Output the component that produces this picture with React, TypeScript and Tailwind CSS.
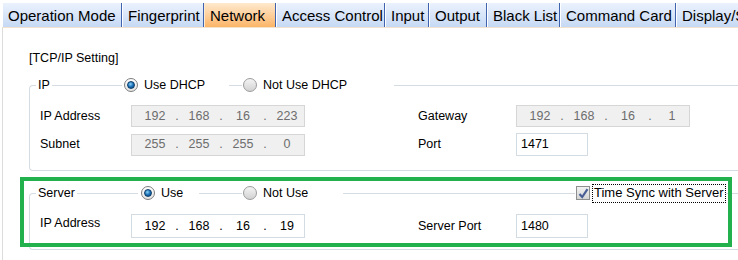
import { ReactNode } from "react";

const tabs = [
  { label: "Operation Mode", width: "w-[120px]" },
  { label: "Fingerprint", width: "w-[82px]" },
  { label: "Network", width: "w-[72px]", active: true },
  { label: "Access Control", width: "w-[109px]" },
  { label: "Input", width: "w-[44px]" },
  { label: "Output", width: "w-[58px]" },
  { label: "Black List", width: "w-[73px]" },
  { label: "Command Card", width: "w-[116px]" },
  { label: "Display/Sound", width: "w-[110px]" },
];

function Radio({ checked, label }: { checked?: boolean; label: string }) {
  return (
    <div className="flex items-center gap-[6px]">
      <span
        className={
          checked
            ? "flex h-[14px] w-[14px] items-center justify-center rounded-full border border-[#7d7d7d] bg-gradient-to-b from-white to-[#e4e4e4]"
            : "flex h-[14px] w-[14px] items-center justify-center rounded-full border border-[#9c9c9c] bg-gradient-to-b from-[#f4f4f4] to-[#d2d2d2]"
        }
      >
        {checked && (
          <span className="h-[8px] w-[8px] rounded-full border border-[#0d3b68] bg-[radial-gradient(circle_at_40%_35%,#8fd0f7,#1a73b8_50%,#0a3c6e)]" />
        )}
      </span>
      <span>{label}</span>
    </div>
  );
}

function Line({ className = "flex-1" }: { className?: string }) {
  return <div className={`h-px bg-[#d5dde3] ${className}`} />;
}

function GroupHeader({ label, lead, children }: { label: string; lead: string; children: ReactNode }) {
  return (
    <div className="flex h-[18px] items-center">
      <div className={`flex h-full items-center ${lead}`}>
        <div className="h-[9px] w-[7px] self-end rounded-tl-[4px] border-l border-t border-[#d5dde3]" />
        <span className="px-[2px]">{label}</span>
        <Line />
      </div>
      {children}
    </div>
  );
}

function IpBox({ parts, disabled, tall }: { parts: string[]; disabled?: boolean; tall?: boolean }) {
  return (
    <div
      className={`flex w-[174px] items-center pl-[3px] ${tall ? "h-[24px]" : "h-[22px]"} ${
        disabled ? "border border-[#d6d6d6] bg-[#f0f0f0] text-[#6d6d6d]" : "border border-[#d3dbe3] bg-white text-black"
      }`}
    >
      {parts.map((p, i) => (
        <div className="flex" key={i}>
          {i > 0 && <span className="w-[4px] text-center">.</span>}
          <span className="w-[40px] text-center">{p}</span>
        </div>
      ))}
    </div>
  );
}

function TextBox({ value, tall }: { value: string; tall?: boolean }) {
  return (
    <div
      className={`flex w-[72px] items-center border border-[#d3dbe3] bg-white pl-[4px] ${tall ? "h-[24px]" : "h-[23px]"}`}
    >
      {value}
    </div>
  );
}

export default function App() {
  return (
    <div className="relative h-[260px] w-[738px] overflow-hidden bg-white font-['Liberation_Sans',Arial,sans-serif] text-[12.5px] text-black">
      {/* tab strip */}
      <div className="ml-[2px] mt-[3px] flex h-[24px] whitespace-nowrap text-[15px]">
        {tabs.map((t) => (
          <div
            className={`flex shrink-0 items-center overflow-hidden border-l border-r pl-[5px] pt-[2px] ${t.width} ${
              t.active
                ? "border-l-[#fbe9d2] border-r-[#3f64ad] bg-gradient-to-b from-[#fee9cd] to-[#fbb566]"
                : "border-l-white border-r-[#3f64ad] bg-gradient-to-b from-[#ebf2fd] to-[#c6d9f4]"
            }`}
            key={t.label}
          >
            {t.label}
          </div>
        ))}
      </div>

      {/* page */}
      <div className="ml-[2px] h-[233px] border-l border-t border-l-[#dcdcdc] border-t-[#f3e2cc] pl-[26px] pt-[22px]">
        <div className="h-[16px] leading-[16px]">[TCP/IP Setting]</div>

        {/* IP group */}
        <div className="mt-[10px] w-[720px]">
          <GroupHeader label="IP" lead="w-[93px]">
            <div className="flex h-full w-[107px] items-center bg-white pl-[2px]">
              <Radio checked label="Use DHCP" />
            </div>
            <Line className="w-[13px]" />
            <div className="flex h-full w-[152px] items-center bg-white pl-[1px]">
              <Radio label="Not Use DHCP" />
            </div>
            <Line />
          </GroupHeader>
          <div className="flex flex-col gap-[6px] rounded-bl-[4px] border-b border-l border-[#d5dde3] pb-[14px] pl-[10px] pt-[11px]">
            <div className="flex items-center">
              <span className="w-[91px]">IP Address</span>
              <IpBox disabled parts={["192", "168", "16", "223"]} />
              <span className="ml-[113px] w-[98px]">Gateway</span>
              <IpBox disabled parts={["192", "168", "16", "1"]} />
            </div>
            <div className="flex items-center">
              <span className="w-[91px]">Subnet</span>
              <IpBox disabled parts={["255", "255", "255", "0"]} />
              <span className="ml-[113px] w-[98px]">Port</span>
              <TextBox value="1471" />
            </div>
          </div>
        </div>

        {/* Server group */}
        <div className="mt-[13px] w-[720px]">
          <GroupHeader label="Server" lead="w-[109px]">
            <div className="flex h-full w-[61px] items-center bg-white pl-[3px]">
              <Radio checked label="Use" />
            </div>
            <Line className="w-[43px]" />
            <div className="flex h-full w-[101px] items-center bg-white pl-[1px]">
              <Radio label="Not Use" />
            </div>
            <Line className="w-[232px]" />
            <div className="flex h-full w-[151px] items-center gap-[2px] bg-white pl-[1px]">
              <span className="flex h-[14px] w-[14px] items-center justify-center border border-[#8e8f8f] bg-gradient-to-b from-[#f2f2f2] to-[#d4d4d4]">
                <svg className="h-[11px] w-[11px]" viewBox="0 0 11 11">
                  <path d="M1.5 6 L4.2 9 L9.5 1.2" fill="none" stroke="#4a5f96" strokeWidth="2.2" />
                </svg>
              </span>
              <span className="flex h-[19px] items-center border border-dotted border-black px-[1px] text-[13px]">
                Time Sync with Server
              </span>
            </div>
            <Line />
          </GroupHeader>
          <div className="flex flex-col rounded-bl-[4px] border-b border-l border-[#d5dde3] pb-[11px] pl-[10px] pt-[12px]">
            <div className="flex items-center">
              <span className="-mt-[5px] w-[91px]">IP Address</span>
              <IpBox tall parts={["192", "168", "16", "19"]} />
              <span className="ml-[113px] w-[98px]">Server Port</span>
              <TextBox tall value="1480" />
            </div>
          </div>
        </div>
      </div>

      {/* green highlight annotation */}
      <div className="absolute left-[20px] top-[177px] h-[70px] w-[712px] border-4 border-[#22b14c]" />
    </div>
  );
}
